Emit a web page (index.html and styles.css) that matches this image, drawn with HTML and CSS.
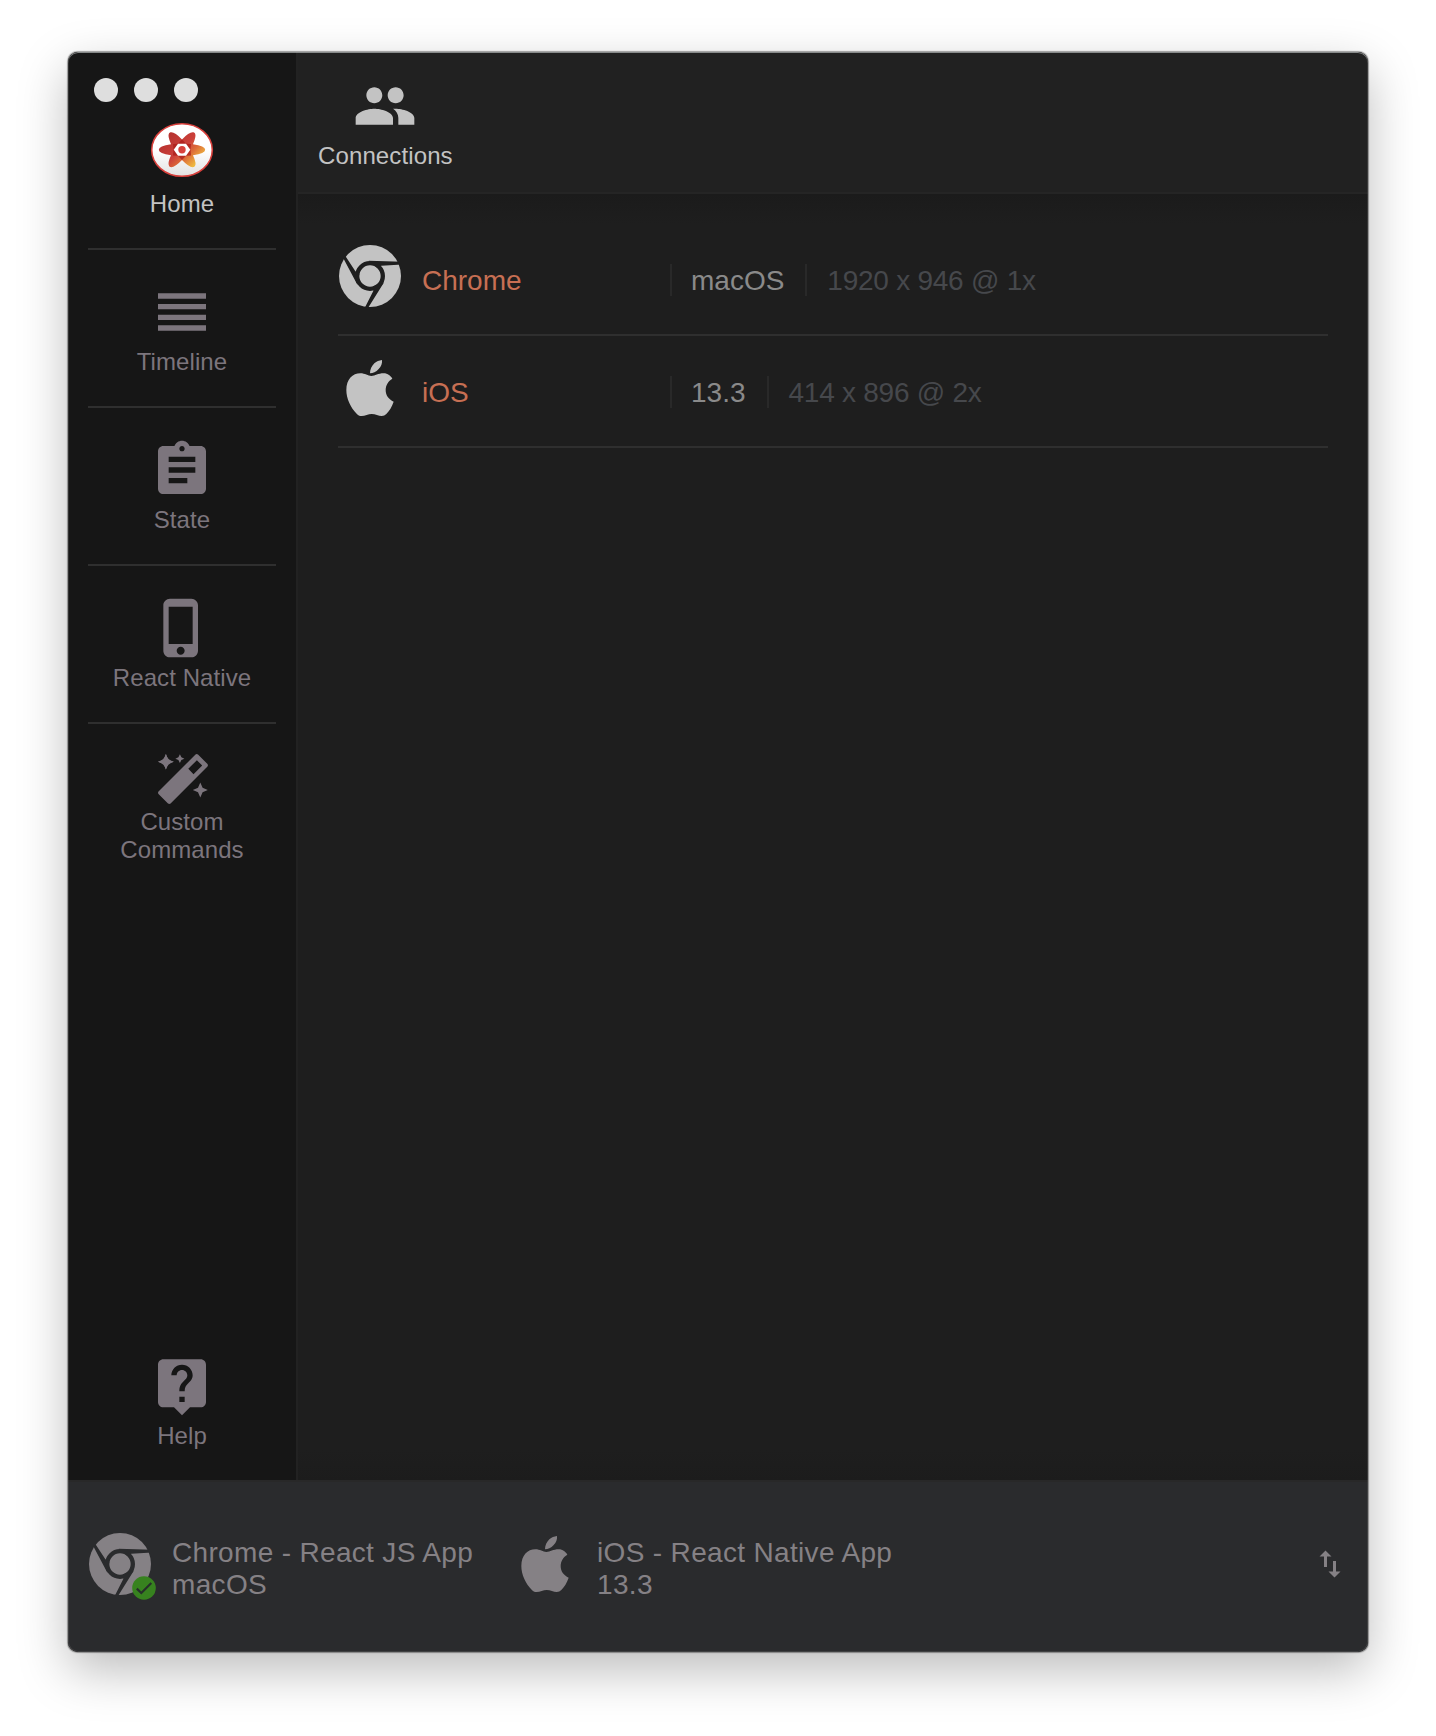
FILE: index.html
```html
<!DOCTYPE html>
<html lang="en">
<head>
<meta charset="utf-8">
<title>Reactotron</title>
<link rel="stylesheet" href="styles.css">
</head>
<body>
<svg class="defs" aria-hidden="true">
  <defs>
    <mask id="chrome-cut" maskUnits="userSpaceOnUse" x="0" y="0" width="192" height="192">
      <circle cx="96" cy="96" r="93" fill="#fff"/>
      <circle cx="96" cy="96" r="38.500" fill="none" stroke="#000" stroke-width="13"/>
      <path d="M92 50L192 53.500V61.500L130 65L118 72Z"/>
      <path d="M92 50L192 53.500V61.500L130 65L118 72Z" transform="rotate(120 96 96)"/>
      <path d="M92 50L192 53.500V61.500L130 65L118 72Z" transform="rotate(240 96 96)"/>
    </mask>
    <linearGradient id="petal" gradientUnits="userSpaceOnUse" x1="16" y1="14" x2="44" y2="43">
      <stop offset="0" stop-color="#b5322f"/>
      <stop offset=".5" stop-color="#cc403a"/>
      <stop offset=".72" stop-color="#dd6a38"/>
      <stop offset="1" stop-color="#eeb840"/>
    </linearGradient>
    <linearGradient id="disc" x1="0" y1="0" x2="0" y2="1">
      <stop offset=".5" stop-color="#fff"/>
      <stop offset="1" stop-color="#e2e2e2"/>
    </linearGradient>
    <clipPath id="flower">
      <ellipse cx="32" cy="27.700" rx="23.200" ry="6.200"/>
      <ellipse cx="32" cy="27.700" rx="21" ry="6.600" transform="rotate(54 32 27.700)"/>
      <ellipse cx="32" cy="27.700" rx="21" ry="6.600" transform="rotate(-54 32 27.700)"/>
    </clipPath>
    <symbol id="chrome" viewBox="0 0 192 192"><rect width="192" height="192" mask="url(#chrome-cut)"/></symbol>
    <symbol id="apple" viewBox="0 0 192 192">
      <path d="M132 12C133 22 130 31 122 39C114 48 105 52 96 52C96 40 101 30 109 22C116 16 123 13 132 12Z"/>
      <path d="M100 60C112 60 120 52 137 52C149 52 159 60 163 68C151 75 143 87 143 102C143 118 152 130 167 137C162 152 154 165 145 174C141 178 137 180 131 180C122 180 112 174 101 174C91 174 81 180 71 180C64 180 60 177 56 173C38 155 25 128 25 102C25 70 44 52 67 52C81 52 90 60 100 60Z"/>
    </symbol>
  </defs>
</svg>

<div class="window">
  <div class="main">
    <nav class="sidebar">
      <div class="lights"><i></i><i></i><i></i></div>
      <a class="item home">
        <svg class="icon" viewBox="0 0 64 64">
          <ellipse cx="32" cy="28" rx="30.300" ry="26.200" fill="url(#disc)" stroke="#d9403c" stroke-width="1.600"/>
          <rect width="64" height="64" fill="url(#petal)" clip-path="url(#flower)"/>
          <path d="M28 21.700L32 17.500L36 21.700L41 22L40.500 27.700L41 33.400L36 33.700L32 38L28 33.700L23 33.400L23.500 27.700L23 22Z" fill="#a91d1a" opacity=".75"/>
          <path d="M23.700 27.700L28 21.700H36L40.300 27.700L36 33.700H28Z" fill="#fff"/>
          <circle cx="32" cy="27.700" r="3.700" fill="#d8423c"/>
        </svg>
        <span>Home</span>
      </a>
      <a class="item">
        <svg class="icon" viewBox="0 0 24 24"><path d="M3 15h18v-2H3v2zm0 4h18v-2H3v2zm0-8h18V9H3v2zm0-6v2h18V5H3z"/></svg>
        <span>Timeline</span>
      </a>
      <a class="item">
        <svg class="icon" viewBox="0 0 24 24"><path d="M19 3h-4.180C14.400 1.840 13.300 1 12 1c-1.300 0-2.400.84-2.820 2H5c-1.100 0-2 .9-2 2v14c0 1.100.9 2 2 2h14c1.100 0 2-.9 2-2V5c0-1.100-.9-2-2-2zm-7 0c.55 0 1 .45 1 1s-.45 1-1 1-1-.45-1-1 .45-1 1-1zm2 14H7v-2h7v2zm3-4H7v-2h10v2zm0-4H7V7h10v2z"/></svg>
        <span>State</span>
      </a>
      <a class="item">
        <svg class="icon" viewBox="0 0 24 24"><path d="M15.500 1h-8C6.120 1 5 2.120 5 3.500v17C5 21.880 6.120 23 7.500 23h8c1.380 0 2.500-1.120 2.500-2.500v-17C18 2.120 16.880 1 15.500 1zm-4 21c-.83 0-1.500-.67-1.500-1.500s.67-1.500 1.500-1.500 1.500.67 1.500 1.500-.67 1.500-1.500 1.500zm4.500-4H7V4h9v14z"/></svg>
        <span>React Native</span>
      </a>
      <a class="item last">
        <svg class="icon" viewBox="0 0 64 64">
          <g transform="translate(8 14)">
            <path d="M7.900 0Q9.500 6.200 15.700 7.800Q9.500 9.400 7.900 15.600Q6.300 9.400 0 7.800Q6.300 6.200 7.900 0Z"/>
            <path d="M7.900 0L10.200 5.500L15.700 7.800L10.200 10.100L7.900 15.600L5.600 10.100L0 7.800L5.600 5.500Z"/>
            <path d="M21.900 .3L23.400 3.300L26.400 4.700L23.400 6.100L21.900 9.100L20.400 6.100L17.400 4.700L20.400 3.300Z"/>
            <path d="M42.300 28.400L44.600 33.700L49.800 36L44.600 38.300L42.300 43.600L40 38.300L34.800 36L40 33.700Z"/>
            <path fill-rule="evenodd" d="M40 .5L49.500 10Q50.400 11.300 49.500 12.500L12.600 49.500Q11.300 50.400 10 49.500L.5 40Q-.4 38.700 .5 37.500L37.500 .5Q38.700-.4 40 .5ZM38.900 6.200L30.300 14.800L35.500 20.200L44.200 11.600Z"/>
          </g>
        </svg>
        <span>Custom<br>Commands</span>
      </a>
      <a class="item last help">
        <svg class="icon" viewBox="0 0 24 24"><path d="M19 2H5c-1.100 0-2 .9-2 2v14c0 1.100.9 2 2 2h4l3 3 3-3h4c1.100 0 2-.9 2-2V4c0-1.100-.9-2-2-2zm-6 16h-2v-2h2v2zm2.070-7.750l-.9.92C13.450 11.900 13 12.500 13 14h-2v-.5c0-1.100.45-2.100 1.170-2.830l1.240-1.260c.37-.36.59-.86.59-1.410 0-1.100-.9-2-2-2s-2 .9-2 2H8c0-2.210 1.790-4 4-4s4 1.790 4 4c0 .88-.36 1.680-.93 2.250z"/></svg>
        <span>Help</span>
      </a>
    </nav>

    <section class="content">
      <header class="header">
        <a class="tab">
          <svg class="icon" viewBox="0 0 24 24"><path d="M16 11c1.660 0 2.990-1.340 2.990-3S17.660 5 16 5c-1.660 0-3 1.340-3 3s1.340 3 3 3zm-8 0c1.660 0 2.990-1.340 2.990-3S9.660 5 8 5C6.340 5 5 6.340 5 8s1.340 3 3 3zm0 2c-2.330 0-7 1.170-7 3.500V19h14v-2.500c0-2.330-4.670-3.500-7-3.500zm8 0c-.29 0-.62.02-.97.05 1.160.84 1.970 1.970 1.970 3.450V19h6v-2.500c0-2.330-4.670-3.500-7-3.500z"/></svg>
          <span>Connections</span>
        </a>
      </header>
      <div class="list">
        <div class="row">
          <svg class="icon"><use href="#chrome"/></svg>
          <div class="name">Chrome</div>
          <div class="version">macOS</div>
          <div class="size">1920 x 946 @ 1x</div>
        </div>
        <div class="row">
          <svg class="icon"><use href="#apple"/></svg>
          <div class="name">iOS</div>
          <div class="version">13.3</div>
          <div class="size">414 x 896 @ 2x</div>
        </div>
      </div>
    </section>
  </div>

  <footer class="footer">
    <div class="device">
      <div class="device-icon">
        <svg class="icon"><use href="#chrome"/></svg>
        <svg class="badge" viewBox="0 0 24 24"><circle cx="12" cy="12" r="11.800" fill="#37821f"/><path d="M4.800 12.600L9.300 17L19.300 7" fill="none" stroke="#26302a" stroke-width="2.200"/></svg>
      </div>
      <div>Chrome - React JS App<br>macOS</div>
    </div>
    <div class="device">
      <div class="device-icon"><svg class="icon"><use href="#apple"/></svg></div>
      <div>iOS - React Native App<br>13.3</div>
    </div>
    <svg class="swap" viewBox="0 0 24 24"><path d="M16 17.010V10h-2v7.010h-3L15 21l4-3.990h-3zM9 3L5 6.990h3V14h2V6.990h3L9 3z"/></svg>
  </footer>
</div>
</body>
</html>
```
FILE: styles.css
```css
* { box-sizing: border-box; }

body {
  margin: 0;
  padding: 52px 68px 84px;
  background: #fff;
  font-family: "Liberation Sans", Arial, sans-serif;
}

svg { display: block; fill: currentColor; flex: none; }
.defs { position: absolute; width: 0; height: 0; }

.window {
  position: relative;
  width: 1300px;
  height: 1600px;
  display: flex;
  flex-direction: column;
  border-radius: 10px;
  overflow: hidden;
  background: #1e1e1e;
  box-shadow: 0 0 1px .5px rgba(0, 0, 0, .35), 0 18px 50px rgba(0, 0, 0, .27);
}
/* light rim along the top edge of the window */
.window::after {
  content: "";
  position: absolute;
  inset: 0;
  border-radius: inherit;
  box-shadow: inset 0 1px 0 rgba(190, 195, 195, .6), inset 0 0 0 1px rgba(130, 130, 130, .25);
  pointer-events: none;
}

.main { flex: 1; display: flex; min-height: 0; }

.sidebar {
  width: 230px;
  padding: 0 20px;
  display: flex;
  flex-direction: column;
  background: #161616;
  border-right: 2px solid #222;
  color: #7c757d;
}

.lights { display: flex; gap: 16px; height: 40px; padding: 26px 0 0 6px; }
.lights i { width: 24px; height: 24px; flex: none; border-radius: 50%; background: #dedede; }

.item {
  height: 158px;
  flex: none;
  display: flex;
  flex-direction: column;
  align-items: center;
  justify-content: center;
  gap: 4px;
  border-bottom: 2px solid #2f2f2f;
  font-size: 24px;
  line-height: 28px;
  letter-spacing: .08px;
  text-align: center;
}
.home { color: #c3c3c3; }
.last { height: 156px; border-bottom: 0; }
.help { margin-top: auto; }

.icon { width: 64px; height: 64px; }

.content { flex: 1; display: flex; flex-direction: column; }

.header {
  height: 142px;
  padding: 22px 20px;
  display: flex;
  background: #212121;
  border-bottom: 2px solid #252525;
  color: #c3c3c3;
}
.tab {
  display: flex;
  flex-direction: column;
  align-items: center;
  gap: 4px;
  font-size: 24px;
  line-height: 28px;
  letter-spacing: .12px;
}

.list {
  flex: 1;
  padding: 30px 40px;
  background: linear-gradient(#1b1b1b, #1e1e1e 30px, #1e1e1e calc(100% - 30px), #1c1c1c);
}
.row {
  height: 112px;
  padding: 20px 0;
  display: flex;
  border-bottom: 2px solid #2f2f2f;
  font-size: 28px;
  line-height: 34px;
  color: #c3c3c3;
}
.row div { height: 32px; margin-top: 20px; }
.name { width: 248px; margin-left: 20px; color: #c76f53; }
.version { padding: 0 21px 0 19px; border-left: 2px solid #292929; color: #8a8a8a; }
.size { padding-left: 20px; border-left: 2px solid #292929; color: #46484c; letter-spacing: -.25px; }

.footer {
  height: 172px;
  padding: 50px 20px 0;
  display: flex;
  background: #2a2b2d;
  border-top: 2px solid #282828;
  color: #858185;
  font-size: 28px;
  line-height: 32px;
  letter-spacing: .33px;
}
.device { display: flex; gap: 20px; margin-right: 40px; }
.device > div:last-child { padding-top: 5px; }
.device-icon { position: relative; height: 64px; }
.badge { position: absolute; right: -4px; bottom: -4px; width: 24px; height: 24px; }
.swap { width: 36px; height: 36px; margin: 14px 0 0 auto; }
```
